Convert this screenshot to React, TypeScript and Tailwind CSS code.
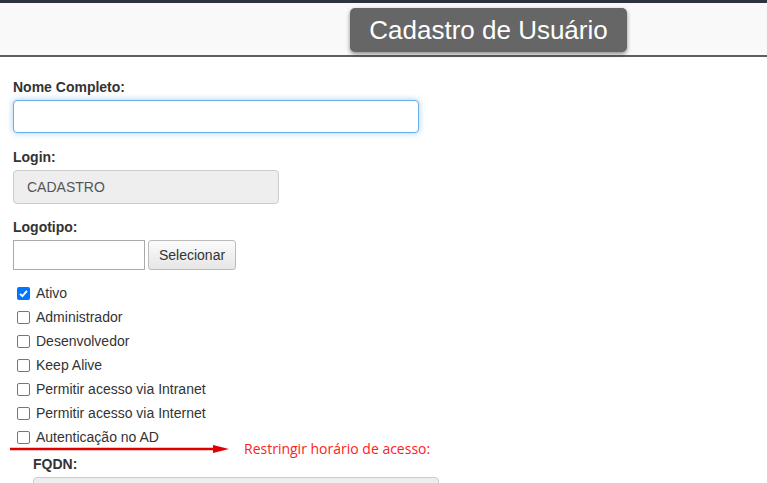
import React from "react";

const checks = [
  { label: "Ativo", checked: true },
  { label: "Administrador" },
  { label: "Desenvolvedor" },
  { label: "Keep Alive" },
  { label: "Permitir acesso via Intranet" },
  { label: "Permitir acesso via Internet" },
  { label: "Autenticação no AD" },
];

function Box({ checked }: { checked?: boolean }) {
  return checked ? (
    <span className="w-[13px] h-[13px] rounded-[2px] bg-[#0075ff] flex items-center justify-center shrink-0">
      <svg width="11" height="11" viewBox="0 0 11 11">
        <path d="M2 5.8 L4.4 8.2 L9 2.8" stroke="white" strokeWidth="1.9" fill="none" />
      </svg>
    </span>
  ) : (
    <span className="w-[13px] h-[13px] rounded-[2px] border border-[#767676] bg-white shrink-0" />
  );
}

export default function App() {
  return (
    <div className="w-[767px] h-[483px] overflow-hidden bg-white text-[#333] relative" style={{ fontFamily: '"Liberation Sans", Arial, sans-serif' }}>
      <div className="h-[3px] bg-[#2d3440]" />
      <div className="h-[54px] bg-[#f9f9f9] border-b-2 border-[#5e5e5e] relative">
        <div className="absolute left-[350px] top-[5px] w-[277px] h-[44px] bg-[#666] rounded-[5px] shadow-[0_2px_4px_rgba(0,0,0,0.45)] flex items-center justify-center text-white text-[26px]">
          Cadastro de Usuário
        </div>
      </div>
      <div className="pl-[13px] pt-[22px]">
        <div className="text-[14px] font-bold leading-[16px]">Nome Completo:</div>
        <div className="mt-[5px] w-[406px] h-[33px] rounded-[4px] border border-[#66afe9] shadow-[0_0_6px_rgba(102,175,233,0.6)] bg-white" />
        <div className="mt-[16px] text-[14px] font-bold leading-[16px]">Login:</div>
        <div className="mt-[5px] w-[266px] h-[34px] rounded-[4px] border border-[#ccc] bg-[#eee] flex items-center pl-[13px] text-[14px] text-[#555]">CADASTRO</div>
        <div className="mt-[15px] text-[14px] font-bold leading-[16px]">Logotipo:</div>
        <div className="mt-[5px] flex gap-[3px]">
          <div className="w-[132px] h-[30px] border border-[#aaa] bg-white" />
          <div className="w-[88px] h-[30px] rounded-[3px] border border-[#bbb] bg-gradient-to-b from-[#fbfbfb] to-[#e6e6e6] flex items-center justify-center text-[14px] text-[#333]">Selecionar</div>
        </div>
        <div className="mt-[11px] pl-[4px] flex flex-col">
          {checks.map((c) => (
            <div key={c.label} className="h-[24px] flex items-center gap-[6px] text-[14px] text-[#333]">
              <Box checked={c.checked} />
              <span>{c.label}</span>
            </div>
          ))}
        </div>
        <div className="pl-[20px] mt-[7px] text-[14px] font-bold leading-[16px]">FQDN:</div>
        <div className="ml-[20px] mt-[5px] w-[406px] h-[34px] rounded-[4px] border border-[#ccc] bg-[#eee]" />
      </div>
      <svg className="absolute left-[10px] top-[443px]" width="222" height="12" viewBox="0 0 222 12">
        <line x1="0" y1="6" x2="205" y2="6" stroke="#e00000" strokeWidth="2.5" />
        <path d="M203 2 L219 6 L203 10 Z" fill="#e00000" />
      </svg>
      <div className="absolute left-[244px] top-[438px] text-[14px] text-[#ff2020]" style={{ fontFamily: '"Open Sans", sans-serif' }}>
        Restringir horário de acesso:
      </div>
    </div>
  );
}
